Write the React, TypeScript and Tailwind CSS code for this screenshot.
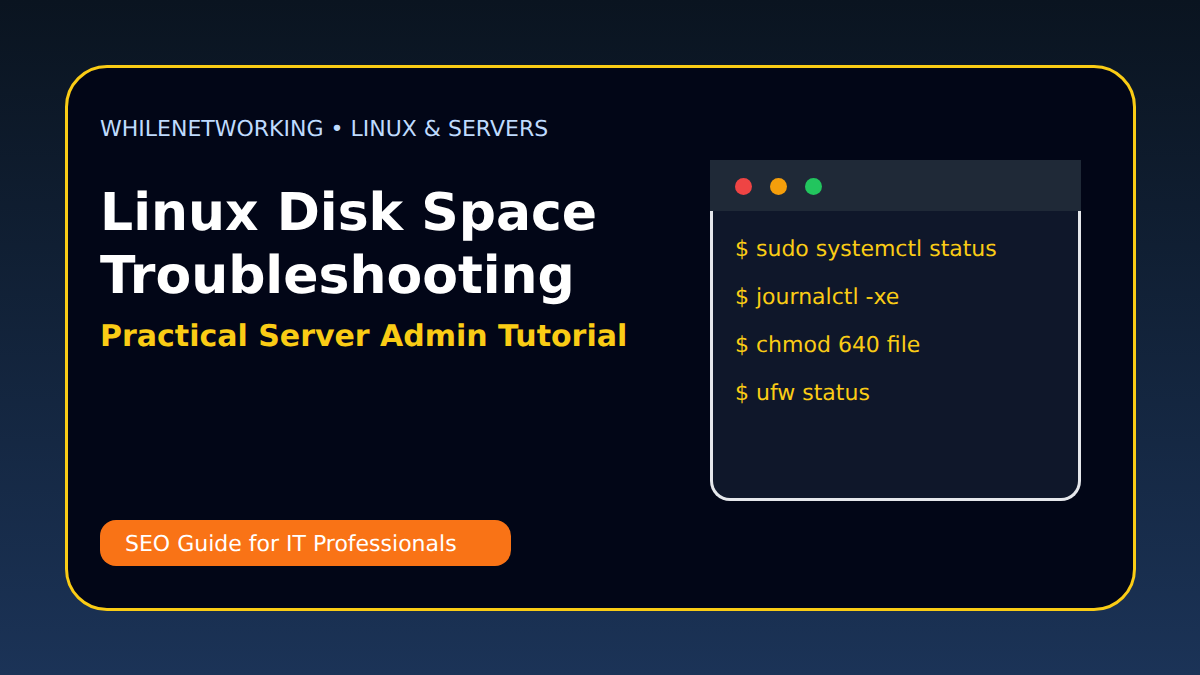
const font = "font-['DejaVu_Sans',sans-serif] [text-rendering:geometricPrecision]";

const commands = [
  '$ sudo systemctl status',
  '$ journalctl -xe',
  '$ chmod 640 file',
  '$ ufw status',
];

function Terminal() {
  return (
    <div className="flex flex-col w-[371px] h-[341px] mt-[92px] ml-[25px]">
      <div className="flex items-center gap-[18px] h-[51px] pt-[2px] pl-[25px] bg-[#1f2937] shrink-0">
        <span className="w-[17px] h-[17px] rounded-full bg-[#ef4444]" />
        <span className="w-[17px] h-[17px] rounded-full bg-[#f59e0b]" />
        <span className="w-[17px] h-[17px] rounded-full bg-[#22c55e]" />
      </div>
      <div className="flex-1 flex flex-col gap-[18px] pt-[24px] pl-[22px] bg-[#0f172a] border-[3px] border-t-0 border-[#e5e7eb] rounded-b-[20px]">
        {commands.map((cmd) => (
          <p key={cmd} className="text-[22px] leading-[30px] text-[#facc15]">
            {cmd}
          </p>
        ))}
      </div>
    </div>
  );
}

export default function App() {
  return (
    <div className={`${font} w-[1200px] h-[675px] overflow-hidden p-[65px] bg-gradient-to-b from-[#0a1420] to-[#1b3357]`}>
      <div className="flex w-[1071px] h-[546px] pl-[32px] bg-[#020617] border-[3px] border-[#facc15] rounded-[42px]">
        <div className="flex flex-col w-[585px] shrink-0 pt-[47px] pb-[42px]">
          <p className="text-[22px] leading-[30px] text-[#bfdbfe]">
            WHILENETWORKING • LINUX &amp; SERVERS
          </p>
          <h1 className="mt-[37px] text-[52px] leading-[63px] font-bold text-white">
            Linux Disk Space
            <br />
            Troubleshooting
          </h1>
          <h2 className="mt-[9px] text-[30px] leading-[40px] font-bold text-[#facc15]">
            Practical Server Admin Tutorial
          </h2>
          <div className="mt-auto flex items-center w-[411px] h-[46px] pt-[2px] pl-[25px] bg-[#f97316] rounded-[16px]">
            <span className="text-[22px] text-white">SEO Guide for IT Professionals</span>
          </div>
        </div>
        <Terminal />
      </div>
    </div>
  );
}
